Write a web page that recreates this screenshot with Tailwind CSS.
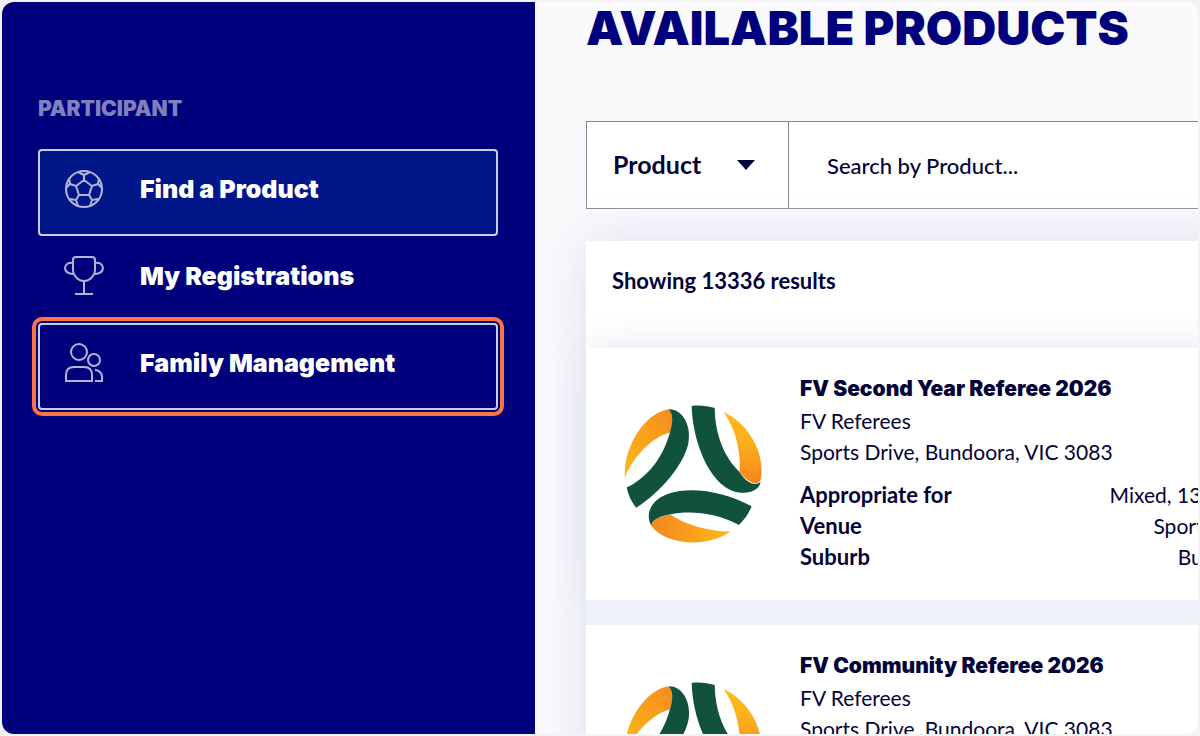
<!DOCTYPE html>
<html lang="en">
<head>
  <meta charset="UTF-8" />
  <meta name="viewport" content="width=device-width, initial-scale=1.0" />
  <title>Available Products</title>
  <script src="https://cdn.jsdelivr.net/npm/@tailwindcss/browser@4"></script>
</head>
<body class="bg-[#f3f3f6] p-[2px] h-screen overflow-hidden font-['Lato',sans-serif] text-[#03033a]">
  <div class="flex h-full rounded-xl overflow-hidden bg-[#fafafc]">

    <!-- Sidebar -->
    <aside class="w-[533px] shrink-0 bg-[#00007c] pl-9 pr-[37px] pt-[93px]">
      <h2 class="font-['Inter',sans-serif] text-[21px] leading-7 font-black text-[#8080be] mb-[26px]">PARTICIPANT</h2>
      <nav class="font-['Inter',sans-serif] text-[25px] font-black text-white">
        <a href="#" class="flex items-center h-[87px] px-6 gap-9 pb-1.5 border-2 border-[#c3d0ea] rounded-sm bg-[#001689]">
          <svg class="size-10 -mt-0.5" viewBox="0 0 40 40" fill="none" stroke="#b3b3da" stroke-width="2" stroke-linejoin="round">
            <circle cx="20" cy="20" r="18" />
            <path d="M20 11l8 6-3 9H15l-3-9zM20 11V6M14 3l6 3 6-3M28 17l6-2 1-6M34 15l4 4M25 26l3 5 6-1M28 31l-2 6M15 26l-3 5-6-1M12 31l2 6M12 17l-6-2-1-6M6 15l-4 4" />
          </svg>
          Find a Product
        </a>
        <a href="#" class="flex items-center h-[87px] px-6 gap-9 pb-1.5 border-2 border-transparent">
          <svg class="size-10 -mt-0.5" viewBox="0 0 40 40" fill="none" stroke="#b3b3da" stroke-width="2">
            <path d="M9 4q0-3 3-3h16q3 0 3 3v10c0 5-3 7-5 9q-2 2-6 2t-6-2c-2-2-5-4-5-9zM20 25v13M11 38h18M9 7c-5-1-8 2-8 5s3 6 8 6M31 7c5-1 8 2 8 5s-3 6-8 6" />
          </svg>
          My Registrations
        </a>
        <a href="#" class="flex items-center h-[87px] px-6 gap-9 pb-1.5 border-2 border-[#c3d0ea] rounded-sm outline-4 outline-offset-2 outline-[#ff7442]">
          <svg class="size-10 -mt-0.5" viewBox="0 0 40 40" fill="none" stroke="#b3b3da" stroke-width="2">
            <circle cx="15" cy="9" r="8" />
            <circle cx="30" cy="17" r="6" />
            <path d="M2 38v-6c0-5 3-8 8-8h10c5 0 8 3 8 8v6zM31 27c4 0 7 3 7 7v4h-7" />
          </svg>
          Family Management
        </a>
      </nav>
    </aside>

    <!-- Main content -->
    <main class="flex-1 min-w-0 overflow-hidden pl-[51px]">
      <h1 class="font-['Inter',sans-serif] text-[47px] leading-[52px] font-black text-[#00007c] whitespace-nowrap">AVAILABLE PRODUCTS</h1>

      <form class="flex h-[88px] mt-[67px] -mr-24 border border-[#858797] bg-white">
        <label class="relative flex items-center w-[202px] border-r border-[#858797]">
          <span class="sr-only">Search type</span>
          <select class="appearance-none w-full h-full pl-[26px] text-[25px] font-bold">
            <option>Product</option>
          </select>
          <svg class="absolute right-8 w-5 h-3 pointer-events-none" viewBox="0 0 20 12"><path d="M1 1h18l-9 10z" fill="#03033a" /></svg>
        </label>
        <input type="text" aria-label="Search by Product" placeholder="Search by Product..." class="flex-1 px-[38px] text-[22px] font-medium placeholder:text-[#03033a]">
      </form>

      <section class="mt-8 -mr-24 bg-white shadow-[0_0_50px_#dcdff0]">
        <p class="h-[107px] px-[26px] pt-[26px] text-[22px] leading-7 font-bold">Showing 13336 results</p>

        <article class="flex h-[252px] bg-white shadow-[0_0_40px_#e4e7f1]">
          <svg class="w-[138px] h-[138px] ml-[38px] mt-[57px] shrink-0" viewBox="72 45 412 412">
            <defs>
              <linearGradient id="g1" x1="1" y1="0" x2="0" y2="1"><stop stop-color="#f68b1f" /><stop offset="1" stop-color="#fdb91a" /></linearGradient>
              <linearGradient id="g2" x1="0" y1="0" x2="0" y2="1"><stop stop-color="#fdb91a" /><stop offset=".4" stop-color="#fdb01b" /><stop offset="1" stop-color="#f5861f" /></linearGradient>
              <linearGradient id="g3" x1="0" y1="0" x2="1" y2="0"><stop stop-color="#f5861f" /><stop offset="1" stop-color="#fdb91a" /></linearGradient>
              <symbol id="ball" viewBox="72 45 412 412">
                <path fill="url(#g1)" d="M75 262C68 174 132 70 205 58C218 66 220 98 209 127C160 138 98 199 75 262Z" />
                <path fill="#10523b" d="M205 58C250 57 274 111 264 160C252 220 184 304 108 352C95 334 85 315 80 291C138 265 188 205 209 127C218 98 220 72 205 58Z" />
                <path fill="#10523b" d="M274 48C298 45 321 48 343 54C343 117 363 193 417 245C438 280 464 287 480 275C475 298 451 309 423 307C335 303 277 162 274 48Z" />
                <path fill="url(#g2)" d="M369 66C443 100 490 184 482 257C482 288 448 286 417 245C421 194 409 120 369 66Z" />
                <path fill="#10523b" d="M155 408C132 370 154 328 204 310C274 286 374 305 453 347C444 370 431 388 415 403C351 369 272 358 210 372C180 376 150 391 155 408Z" />
                <path fill="url(#g3)" d="M155 408C150 391 180 376 210 372C253 402 325 423 390 423C315 475 195 461 155 408Z" />
              </symbol>
            </defs>
            <use href="#ball" x="72" y="45" width="412" height="412" />
          </svg>
          <div class="flex-1 pl-[38px] pr-[26px] pt-[25px] text-[21px] leading-8">
            <h3 class="font-['Inter',sans-serif] font-black">FV Second Year Referee 2026</h3>
            <p class="leading-[31px]">FV Referees</p>
            <p class="leading-[31px]">Sports Drive, Bundoora, VIC 3083</p>
            <dl class="grid grid-cols-[auto_1fr] mt-3 leading-[31px]">
              <dt class="text-[22px] font-bold">Appropriate for</dt><dd class="text-right">Mixed, 13 to 99+</dd>
              <dt class="text-[22px] font-bold">Venue</dt><dd class="text-right">Sports Drive</dd>
              <dt class="text-[22px] font-bold">Suburb</dt><dd class="text-right">Bundoora</dd>
            </dl>
          </div>
        </article>

        <article class="flex h-[252px] mt-[25px] bg-white shadow-[0_0_0_25px_#eff1f8] [clip-path:inset(-25px_0_0_0)]">
          <svg class="w-[138px] h-[138px] ml-[38px] mt-[57px] shrink-0" viewBox="72 45 412 412">
            <use href="#ball" x="72" y="45" width="412" height="412" />
          </svg>
          <div class="flex-1 pl-[38px] pr-[26px] pt-[25px] text-[21px] leading-8">
            <h3 class="font-['Inter',sans-serif] font-black">FV Community Referee 2026</h3>
            <p class="leading-[31px]">FV Referees</p>
            <p class="leading-[31px]">Sports Drive, Bundoora, VIC 3083</p>
          </div>
        </article>
      </section>
    </main>
  </div>
</body>
</html>
